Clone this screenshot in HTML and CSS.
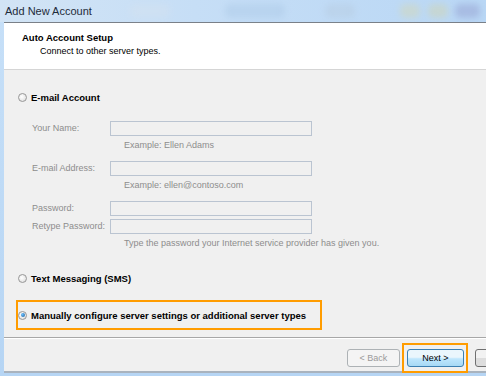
FILE: index.html
```html
<!DOCTYPE html>
<html lang="en">
<head>
    <meta charset="UTF-8">
    <title>Add New Account</title>
    <link rel="stylesheet" href="styles.css">
</head>
<body>
    <div class="titlebar">
        <span class="title">Add New Account</span>
        <div class="ribbon-ghost">
            <span class="blob b1"></span>
            <span class="blob b2"></span>
            <span class="blob b3"></span>
            <span class="blob b4"></span>
            <span class="blob b5"></span>
            <span class="blob b6"></span>
        </div>
    </div>

    <div class="dialog">
        <div class="header">
            <h2>Auto Account Setup</h2>
            <p>Connect to other server types.</p>
        </div>

        <div class="content">
            <label class="radio-row">
                <span class="radio"></span> E-mail Account
            </label>

            <div class="form">
                <span class="lbl">Your Name:</span>
                <span class="field"></span>
                <span class="hint">Example: Ellen Adams</span>

                <span class="lbl">E-mail Address:</span>
                <span class="field"></span>
                <span class="hint">Example: ellen@contoso.com</span>

                <span class="lbl">Password:</span>
                <span class="field"></span>
                <span class="lbl tight">Retype Password:</span>
                <span class="field tight"></span>
                <span class="hint wide">Type the password your Internet service provider has given you.</span>
            </div>

            <label class="radio-row sms">
                <span class="radio"></span> Text Messaging (SMS)
            </label>

            <div class="highlight">
                <label class="radio-row">
                    <span class="radio checked"></span> Manually configure server settings or additional server types
                </label>
            </div>
        </div>

        <div class="footer">
            <button class="btn" disabled>&lt; Back</button>
            <div class="next-wrap">
                <button class="btn next">Next &gt;</button>
            </div>
            <button class="btn cancel" aria-label="Cancel"></button>
        </div>
    </div>
</body>
</html>
```

FILE: styles.css
```css
* { margin: 0; padding: 0; box-sizing: border-box; }

body {
    width: 486px;
    height: 376px;
    overflow: hidden;
    background: linear-gradient(#c7e0f8, #b6d5f4);
    font-family: "Liberation Sans", Arial, sans-serif;
    font-size: 9px;
    color: #000;
}

.titlebar {
    position: relative;
    height: 22px;
    padding: 5px 0 0 5px;
    background: linear-gradient(90deg, #d2e4f5 0%, #c6def6 40%, #b9d7f5 100%);
}

.title { font-size: 11px; color: #1e2b3a; }

.ribbon-ghost { position: absolute; top: 0; left: 100px; right: 0; height: 22px; }
.blob { position: absolute; top: 4px; height: 14px; border-radius: 5px; filter: blur(3px); opacity: .4; }
.b1 { left: 30px; width: 40px; background: #d6e2ee; }
.b2 { left: 125px; width: 60px; background: #a8c6e4; }
.b3 { left: 225px; width: 30px; background: #b5c9dd; }
.b4 { left: 300px; width: 20px; background: #d9d7a8; }
.b5 { left: 328px; width: 20px; background: #d6d4a2; }
.b6 { left: 355px; width: 25px; background: #8d94c8; }

.dialog {
    margin-left: 4px;
    width: 482px;
    height: 351px;
    background: #f0f0f0;
    border-top: 1px solid #7a8088;
    border-bottom: 2px solid #a9b3be;
}

.header {
    height: 47px;
    background: #fff;
    border-bottom: 1px solid #d5d5d5;
    padding: 9px 0 0 18px;
}

.header h2 { font-size: 9.5px; font-weight: bold; line-height: 12px; }
.header p { line-height: 12px; margin: 1px 0 0 18px; }

.content { height: 267px; padding: 20px 0 0 14px; }

.radio-row {
    display: flex;
    align-items: center;
    gap: 4px;
    height: 14px;
    font-size: 9.5px;
    font-weight: bold;
}

.radio-row.sms { margin-top: 22px; }

.radio {
    width: 9px;
    height: 9px;
    border-radius: 50%;
    border: 1px solid #979797;
    background: radial-gradient(circle at 40% 40%, #fff, #d9d9d9);
    display: inline-flex;
    align-items: center;
    justify-content: center;
}

.radio.checked::after {
    content: "";
    width: 4px;
    height: 4px;
    border-radius: 50%;
    background: radial-gradient(circle at 35% 35%, #6ac0ff, #1c5d99);
}

.form {
    display: grid;
    grid-template-columns: 78px 202px;
    align-items: center;
    margin: 17px 0 0 14px;
    color: #8d8d8d;
}

.lbl { height: 15px; line-height: 15px; }

.field {
    height: 15px;
    border: 1px solid #bac4d1;
    background: #f0f0f0;
}

.lbl.tight, .field.tight { margin-top: 3px; }

.hint {
    grid-column: 2;
    line-height: 12px;
    margin: 3px 0 10px 14px;
    white-space: nowrap;
}

.hint.wide { margin-bottom: 0; }

.highlight {
    width: 306px;
    height: 30px;
    margin: 15px 0 0 -2px;
    border: 2px solid #ff9c00;
    padding: 6px 0 0 0;
}

.footer {
    height: 34px;
    border-top: 1px solid #a7a7a7;
    box-shadow: inset 0 1px 0 #fff;
    display: flex;
    align-items: flex-start;
    padding: 5px 0 0 343px;
    overflow-x: clip;
    overflow-y: visible;
}

.btn {
    flex-shrink: 0;
    margin-top: 6px;
    height: 18px;
    width: 53px;
    font-family: "Liberation Sans", Arial, sans-serif;
    font-size: 9px;
    border: 1px solid #707070;
    border-radius: 3px;
    background: linear-gradient(#f2f2f2 50%, #dddddd 50%);
}

.btn:disabled {
    color: #9a9a9a;
    border-color: #adb2b5;
    background: #f4f4f4;
}

.next-wrap {
    position: relative;
    flex-shrink: 0;
    margin-left: 2px;
    padding: 4px 2px 4px 3px;
    border: 2px solid #ff9c00;
}

.btn.next {
    margin-top: 0;
    width: 57px;
    border-color: #3c7fb1;
    background: linear-gradient(#eaf6fd 45%, #bee6fd 55%, #a7d9f5);
}

.cancel { margin-left: 7px; }
```
